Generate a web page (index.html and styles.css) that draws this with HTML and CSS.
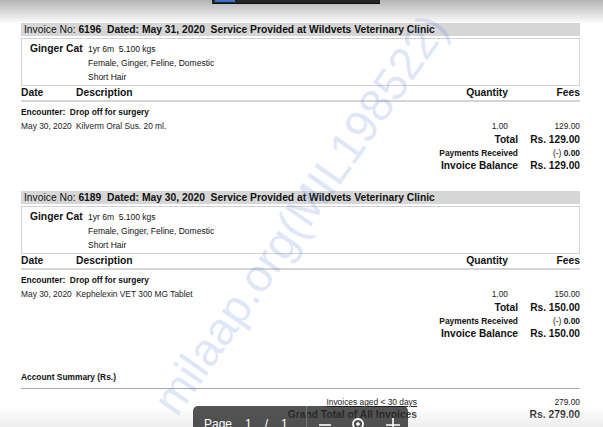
FILE: index.html
```html
<!DOCTYPE html>
<html>
<head>
<meta charset="utf-8">
<link rel="stylesheet" href="styles.css">
</head>
<body>
<div class="page">
  <section class="invoice">
    <div class="inv-head">Invoice No: <b>6196&nbsp; Dated: May 31, 2020&nbsp; Service Provided at Wildvets Veterinary Clinic</b></div>
    <div class="pet">
      <div class="pet-name">Ginger Cat</div>
      <div class="pet-info">
        <div>1yr 6m&nbsp; 5.100 kgs</div>
        <div>Female, Ginger, Feline, Domestic</div>
        <div>Short Hair</div>
      </div>
    </div>
    <div class="row thead">
      <div>Date</div><div>Description</div><div class="r">Quantity</div><div class="r">Fees</div>
    </div>
    <div class="encounter">Encounter:&nbsp; Drop off for surgery</div>
    <div class="row item">
      <div>May 30, 2020</div><div>Kilverm Oral Sus. 20 ml.</div><div class="r qty">1.00</div><div class="r">129.00</div>
    </div>
    <div class="totals">
      <div class="big">Total</div><div class="big">Rs. 129.00</div>
      <div class="small">Payments Received</div><div class="small"><span class="norm">(-)</span> 0.00</div>
      <div class="big">Invoice Balance</div><div class="big">Rs. 129.00</div>
    </div>
  </section>

  <section class="invoice">
    <div class="inv-head">Invoice No: <b>6189&nbsp; Dated: May 30, 2020&nbsp; Service Provided at Wildvets Veterinary Clinic</b></div>
    <div class="pet">
      <div class="pet-name">Ginger Cat</div>
      <div class="pet-info">
        <div>1yr 6m&nbsp; 5.100 kgs</div>
        <div>Female, Ginger, Feline, Domestic</div>
        <div>Short Hair</div>
      </div>
    </div>
    <div class="row thead">
      <div>Date</div><div>Description</div><div class="r">Quantity</div><div class="r">Fees</div>
    </div>
    <div class="encounter">Encounter:&nbsp; Drop off for surgery</div>
    <div class="row item">
      <div>May 30, 2020</div><div>Kephelexin VET 300 MG Tablet</div><div class="r qty">1.00</div><div class="r">150.00</div>
    </div>
    <div class="totals">
      <div class="big">Total</div><div class="big">Rs. 150.00</div>
      <div class="small">Payments Received</div><div class="small"><span class="norm">(-)</span> 0.00</div>
      <div class="big">Invoice Balance</div><div class="big">Rs. 150.00</div>
    </div>
  </section>

  <section class="summary">
    <div class="sum-title">Account Summary (Rs.)</div>
    <div class="sum-grid">
      <div class="aged"><u>Invoices aged &lt; 30 days</u></div><div class="aged">279.00</div>
      <div class="grand">Grand Total of All Invoices</div><div class="grand">Rs. 279.00</div>
    </div>
  </section>
</div>

<div class="watermark">milaap.org(MIL198522)</div>

<div class="top-shade"></div>
<div class="top-bar"><span class="top-blue"></span></div>
<div class="top-due">Total Due: Rs. 279.00</div>
<div class="bottom-shade"></div>

<div class="viewer">
  <div class="pager"><span>Page</span><span>1</span><span>/</span><span>1</span></div>
  <div class="zoom">
    <svg width="16" height="16" viewBox="0 0 16 16"><path d="M2 8h12" stroke="#fff" stroke-width="1.6"/></svg>
    <svg width="16" height="16" viewBox="0 0 16 16"><circle cx="7" cy="7" r="5" fill="none" stroke="#fff" stroke-width="1.8"/><path d="M5 7h4M7 5v4" stroke="#fff" stroke-width="1.4"/><path d="M10.5 10.5l4 4" stroke="#fff" stroke-width="2"/></svg>
    <svg width="16" height="16" viewBox="0 0 16 16"><path d="M1 8h14M8 1v14" stroke="#fff" stroke-width="1.6"/></svg>
  </div>
</div>
</body>
</html>
```

FILE: styles.css
```css
html, body {
  margin: 0;
  padding: 0;
  background: #fff;
}
body {
  font-family: "Liberation Sans", Arial, sans-serif;
  color: #111;
  width: 603px;
  height: 427px;
  overflow: hidden;
  position: relative;
}
.page {
  padding: 23px 23px 0 21px;
}
.invoice {
  margin-bottom: 18px;
}
.inv-head {
  background: #d6d6d6;
  font-size: 10.3px;
  line-height: 13px;
  padding-left: 3px;
  white-space: nowrap;
}
.pet {
  margin-top: 2px;
  border: 1px solid #d2d2d2;
  padding: 3px 0 1px 8px;
  display: grid;
  grid-template-columns: 58px 1fr;
}
.pet-name {
  font-weight: bold;
  font-size: 10.3px;
  line-height: 14px;
}
.pet-info {
  font-size: 8.5px;
  line-height: 14px;
}
.row {
  display: grid;
  grid-template-columns: 55px 1fr 100px 72px;
}
.r { text-align: right; }
.thead {
  font-weight: bold;
  font-size: 10.3px;
  line-height: 14px;
  border-bottom: 2px solid #d4d4d4;
}
.encounter {
  font-weight: bold;
  font-size: 8.4px;
  line-height: 14px;
  margin-top: 3px;
}
.item {
  font-size: 8.4px;
  line-height: 14px;
  color: #222;
}
.totals {
  display: grid;
  grid-template-columns: 1fr 62px;
  text-align: right;
  font-weight: bold;
}
.big {
  font-size: 10.2px;
  line-height: 14px;
}
.small {
  font-size: 8.4px;
  line-height: 12px;
}
.norm { font-weight: normal; }
.summary {
  margin-top: 29px;
}
.sum-title {
  font-weight: bold;
  font-size: 8.4px;
  line-height: 14px;
  padding-bottom: 4px;
  border-bottom: 1px solid #a8a8a8;
}
.sum-grid {
  margin-top: 7px;
  display: grid;
  grid-template-columns: 1fr 163px;
  text-align: right;
}
.aged {
  font-size: 8.4px;
  line-height: 12px;
  color: #222;
}
.grand {
  font-weight: bold;
  font-size: 10.3px;
  line-height: 13px;
}
.watermark {
  position: absolute;
  left: 300px;
  top: 214px;
  transform: translate(-50%, -50%) rotate(-55deg);
  font-family: "Liberation Sans", Arial, sans-serif;
  font-size: 46px;
  font-weight: normal;
  color: rgba(80, 125, 220, 0.2);
  white-space: nowrap;
  pointer-events: none;
}
.top-shade {
  position: absolute;
  left: 0; top: 0;
  width: 603px; height: 24px;
  background: linear-gradient(#b4b4b4, rgba(255,255,255,0));
}
.top-bar {
  position: absolute;
  left: 212px; top: 0;
  width: 168px; height: 3px;
  background: #252525;
  border-bottom: 1px solid #111;
}
.top-blue {
  position: absolute;
  left: 3px; top: 0;
  width: 20px; height: 2px;
  background: #3d70c8;
}
.top-due {
  position: absolute;
  top: -10px;
  left: 447px;
  font-weight: bold;
  font-size: 11px;
  line-height: 12px;
  color: #222;
}
.bottom-shade {
  position: absolute;
  left: 0; bottom: 0;
  width: 603px; height: 20px;
  background: linear-gradient(rgba(235,235,235,0), rgba(225,225,225,0.6));
  pointer-events: none;
}
.viewer {
  position: absolute;
  left: 193px;
  top: 406px;
  width: 215px;
  height: 30px;
  background: rgba(35, 35, 35, 0.78);
  border-radius: 5px 5px 0 0;
  display: flex;
  color: #fff;
  font-family: "Liberation Sans", Arial, sans-serif;
}
.pager {
  width: 114px;
  border-right: 1px solid #777;
  display: flex;
  gap: 13px;
  padding: 11px 0 0 11px;
  font-size: 12px;
  line-height: 14px;
  box-sizing: border-box;
}
.zoom {
  display: flex;
  gap: 18px;
  padding: 11px 0 0 10px;
}
.zoom svg { display: block; }
```
